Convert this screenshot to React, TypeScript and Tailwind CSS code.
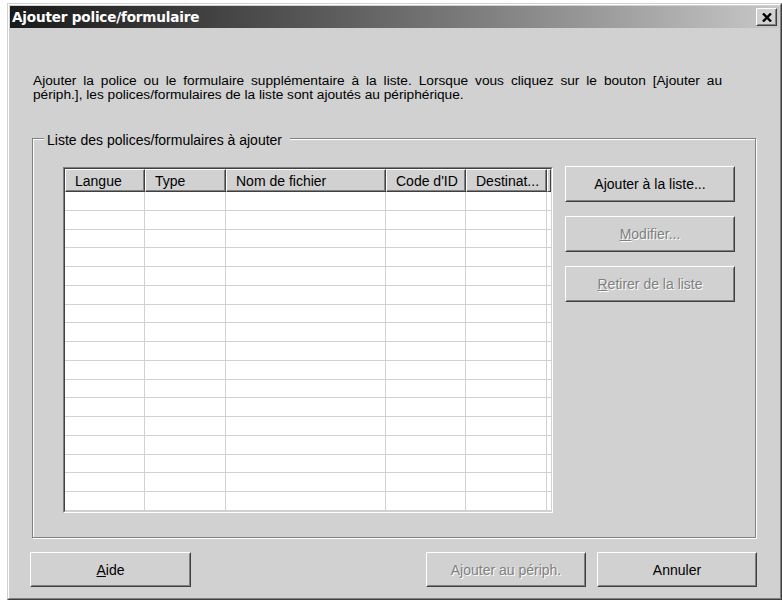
import React from 'react';

const cols = [
  { label: 'Langue', w: 'w-[80px]' },
  { label: 'Type', w: 'w-[81px]' },
  { label: 'Nom de fichier', w: 'w-[160px]' },
  { label: "Code d'ID", w: 'w-[80px]' },
  { label: 'Destinat...', w: 'w-[81px]' },
];

const rows = Array.from({ length: 17 }, (_, i) => i);

function Btn({
  children,
  disabled,
  className = '',
}: {
  children: React.ReactNode;
  disabled?: boolean;
  className?: string;
}) {
  return (
    <div
      className={`border border-t-white border-l-white border-r-[#404040] border-b-[#404040] bg-[#d1d1d1] ${className}`}
    >
      <div className="h-full border border-t-[#d1d1d1] border-l-[#d1d1d1] border-r-[#808080] border-b-[#808080] flex items-center justify-center">
        <span
          className={
            disabled
              ? 'text-[#808080] [text-shadow:1px_1px_0_#fff]'
              : 'text-black'
          }
        >
          {children}
        </span>
      </div>
    </div>
  );
}

function ListView() {
  return (
    <div className="w-[490px] h-[346px] border border-t-[#808080] border-l-[#808080] border-r-white border-b-white">
      <div className="h-full flex flex-col bg-white border border-t-[#404040] border-l-[#404040] border-r-[#d1d1d1] border-b-[#d1d1d1]">
        {/* Header */}
        <div className="flex h-[23px] shrink-0">
          {cols.map(c => (
            <div
              key={c.label}
              className={`${c.w} shrink-0 bg-[#d1d1d1] border border-t-white border-l-white border-r-[#404040] border-b-[#404040] shadow-[inset_-1px_-1px_0_#808080] flex items-center pl-[9px] whitespace-nowrap overflow-hidden`}
            >
              {c.label}
            </div>
          ))}
          <div className="flex-1 bg-[#d1d1d1] border border-t-white border-l-white border-r-[#404040] border-b-[#404040]" />
        </div>

        {/* Body */}
        <div className="flex-1 flex flex-col">
          {rows.map(r => (
            <div key={r} className="flex-1 flex border-b border-[#d1d1d1]">
              {cols.map(c => (
                <div key={c.label} className={`${c.w} shrink-0 border-r border-[#d1d1d1]`} />
              ))}
              <div className="flex-1" />
            </div>
          ))}
        </div>
      </div>
    </div>
  );
}

export default function App() {
  return (
    <div className="w-[782px] h-[601px] bg-white pl-[7px] pt-[3px] font-['Liberation_Sans',Arial,sans-serif] text-[14px] leading-[14px] text-black">
      <div className="w-[775px] h-[597px] border border-t-[#d1d1d1] border-l-[#d1d1d1] border-r-[#404040] border-b-[#404040]">
        <div className="h-full border border-t-white border-l-white border-r-[#808080] border-b-[#808080] bg-[#d1d1d1] p-px flex flex-col">
          {/* Title bar */}
          <div className="h-[22px] shrink-0 flex items-center justify-between bg-gradient-to-r from-[#1a1a1a] to-[#c8c8c8] pl-[2px] pr-[2px]">
            <span className="text-white font-bold text-[13.6px] font-['DejaVu_Sans',Verdana,sans-serif] tracking-[-0.2px]">
              Ajouter police/formulaire
            </span>
            <div className="w-[21px] h-[18px] border border-t-white border-l-white border-r-[#404040] border-b-[#404040] bg-[#d1d1d1]">
              <div className="h-full border border-t-[#d1d1d1] border-l-[#d1d1d1] border-r-[#808080] border-b-[#808080] flex items-center justify-center">
                <svg width="10" height="9" viewBox="0 0 10 9">
                  <path d="M1 0.5 L9 8.5 M9 0.5 L1 8.5" stroke="#000" strokeWidth="2.4" />
                </svg>
              </div>
            </div>
          </div>

          {/* Intro text */}
          <p className="ml-[23px] mt-[46px] w-[689px] text-justify text-[13.7px]">
            Ajouter la police ou le formulaire supplémentaire à la liste. Lorsque vous cliquez sur le bouton [Ajouter au périph.], les polices/formulaires de la liste sont ajoutés au périphérique.
          </p>

          {/* Group box */}
          <div className="relative ml-[22px] mt-[36px] w-[724px] border border-[#808080] shadow-[inset_1px_1px_0_#fff,1px_1px_0_#fff] pt-[28px] pl-[30px] pr-[20px] pb-[24px] flex gap-[12px]">
            <span className="absolute left-[11px] top-[-6px] bg-[#d1d1d1] px-[3px] pr-[8px]">
              Liste des polices/formulaires à ajouter
            </span>
            <ListView />
            <div className="flex flex-col gap-[14px] mt-[-1px]">
              <Btn className="w-[170px] h-[36px]">Ajouter à la liste...</Btn>
              <Btn className="w-[170px] h-[36px]" disabled>
                <u>M</u>odifier...
              </Btn>
              <Btn className="w-[170px] h-[36px]" disabled>
                <u>R</u>etirer de la liste
              </Btn>
            </div>
          </div>

          {/* Bottom buttons */}
          <div className="mt-[14px] ml-[20px] mr-[22px] flex">
            <Btn className="w-[161px] h-[35px]">
              <u>A</u>ide
            </Btn>
            <div className="flex-1" />
            <div className="flex gap-[11px]">
              <Btn className="w-[160px] h-[35px]" disabled>
                A<u>j</u>outer au périph.
              </Btn>
              <Btn className="w-[160px] h-[35px]">Annuler</Btn>
            </div>
          </div>
        </div>
      </div>
    </div>
  );
}
